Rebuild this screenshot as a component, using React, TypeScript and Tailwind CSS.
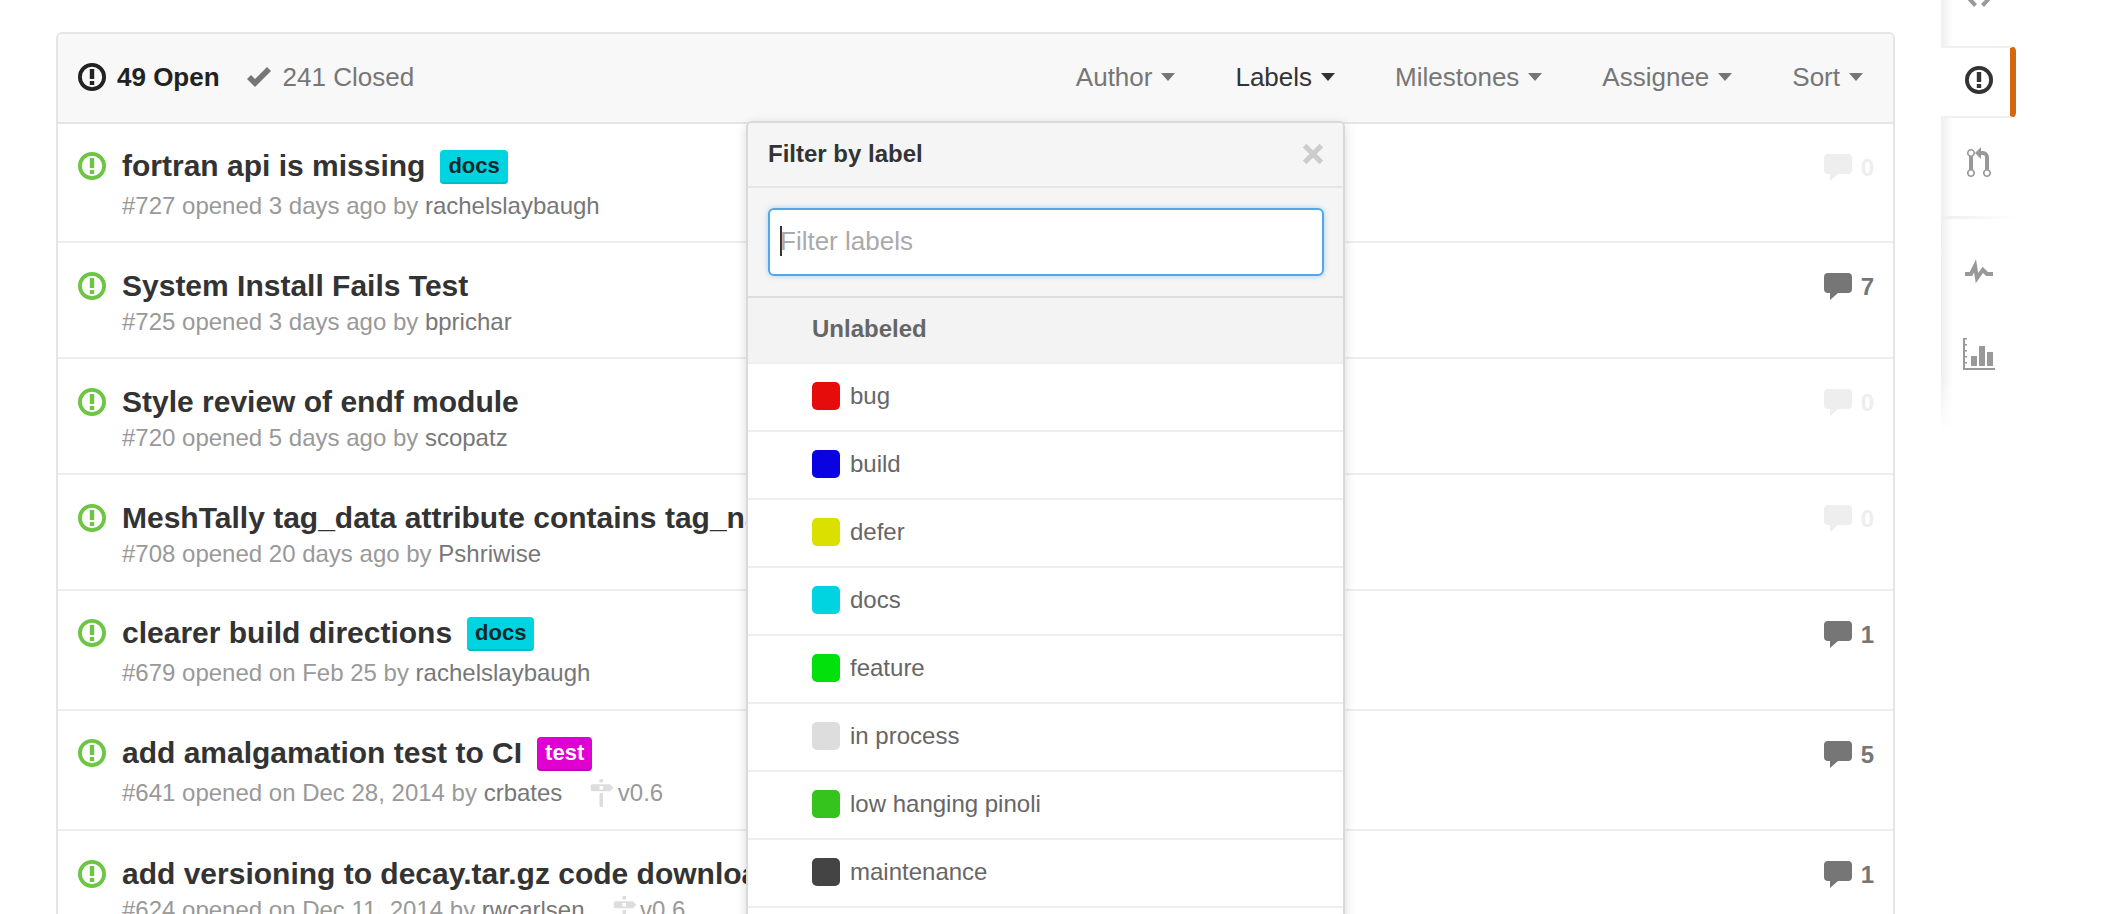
import React from 'react';

const ISSUE_PATH = 'M7 2.9a5.1 5.1 0 1 1 0 10.2A5.1 5.1 0 0 1 7 2.9zM7 1a7 7 0 1 0 0 14A7 7 0 0 0 7 1zm1.1 3H5.9v5h2.2V4zm0 6H5.9v2h2.2v-2z';

const IssueIcon: React.FC = () => (
  <svg viewBox="0 0 14 16" className="w-[28px] h-[32px] fill-current shrink-0">
    <path fillRule="evenodd" d={ISSUE_PATH} />
  </svg>
);

const CommentIcon: React.FC = () => (
  <svg viewBox="0 0 28 27" className="w-[28px] h-[27px] fill-current shrink-0">
    <path d="M4 0h20a4 4 0 0 1 4 4v12a4 4 0 0 1-4 4H14l-8 7v-7H4a4 4 0 0 1-4-4V4a4 4 0 0 1 4-4z" />
  </svg>
);

const MilestoneIcon: React.FC = () => (
  <svg viewBox="0 0 14 16" className="w-[24.5px] h-[28px] fill-[#ddd] shrink-0">
    <path d="M8 2H6V0h2v2zm4 5H2c-.55 0-1-.45-1-1V4c0-.55.45-1 1-1h10l2 2-2 2zM8 4H6v2h2V4zM6 16h2V8H6v8z" />
  </svg>
);

const Caret: React.FC<{ dark?: boolean }> = ({ dark }) => (
  <span className={`ml-[9px] w-0 h-0 border-x-[7.5px] border-t-[8px] border-x-transparent ${dark ? 'border-t-[#333]' : 'border-t-[#767676]'}`} />
);

interface IssueRow {
  title: string;
  meta: string;
  author: string;
  comments: number;
  height: string;
  label?: { name: string; className: string };
  milestone?: string;
}

const issues: IssueRow[] = [
  { title: 'fortran api is missing', meta: '#727 opened 3 days ago by', author: 'rachelslaybaugh', comments: 0, height: 'h-[119px]', label: { name: 'docs', className: 'bg-[#00d4e0] text-[#13282b]' } },
  { title: 'System Install Fails Test', meta: '#725 opened 3 days ago by', author: 'bprichar', comments: 7, height: 'h-[116px]' },
  { title: 'Style review of endf module', meta: '#720 opened 5 days ago by', author: 'scopatz', comments: 0, height: 'h-[116px]' },
  { title: 'MeshTally tag_data attribute contains tag_names', meta: '#708 opened 20 days ago by', author: 'Pshriwise', comments: 0, height: 'h-[116px]' },
  { title: 'clearer build directions', meta: '#679 opened on Feb 25 by', author: 'rachelslaybaugh', comments: 1, height: 'h-[120px]', label: { name: 'docs', className: 'bg-[#00d4e0] text-[#13282b]' } },
  { title: 'add amalgamation test to CI', meta: '#641 opened on Dec 28, 2014 by', author: 'crbates', comments: 5, height: 'h-[120px]', label: { name: 'test', className: 'bg-[#e000d0] text-white' }, milestone: 'v0.6' },
  { title: 'add versioning to decay.tar.gz code download', meta: '#624 opened on Dec 11, 2014 by', author: 'rwcarlsen', comments: 1, height: 'h-[120px]', milestone: 'v0.6' },
];

const labels = [
  { name: 'bug', color: 'bg-[#e60c0c]' },
  { name: 'build', color: 'bg-[#0b02e1]' },
  { name: 'defer', color: 'bg-[#dbe000]' },
  { name: 'docs', color: 'bg-[#00d4e0]' },
  { name: 'feature', color: 'bg-[#02e10c]' },
  { name: 'in process', color: 'bg-[#dddddd]' },
  { name: 'low hanging pinoli', color: 'bg-[#35c41d]' },
  { name: 'maintenance', color: 'bg-[#444444]' },
  { name: 'question', color: 'bg-[#cc317c]' },
];

const Issue: React.FC<{ issue: IssueRow; last: boolean }> = ({ issue, last }) => (
  <div className={`flex justify-between pl-[20px] pr-[19px] ${issue.height} ${last ? '' : 'border-b-2 border-[#eeeeee]'}`}>
    <div className="flex gap-4 min-w-0">
      <div className={issue.label ? 'pt-[26px] text-[#6cc644]' : 'pt-[27px] text-[#6cc644]'}>
        <IssueIcon />
      </div>
      <div className={issue.label ? 'pt-[21px]' : 'pt-[23px]'}>
        <div className={`flex items-center gap-[15px] whitespace-nowrap ${issue.label ? 'h-[42px]' : 'h-10'}`}>
          <span className="text-[30px] leading-10 font-bold text-[#333]">{issue.title}</span>
          {issue.label && (
            <span className={`h-[34px] mt-[2px] px-2 rounded-[4px] text-[22px] leading-[32px] font-bold shadow-[inset_0_-2px_0_rgba(0,0,0,0.12)] ${issue.label.className}`}>
              {issue.label.name}
            </span>
          )}
        </div>
        <div className={`flex items-center h-8 text-[24px] text-[#999] whitespace-nowrap ${issue.label ? 'mt-[3px]' : ''}`}>
          <span>{issue.meta}&nbsp;</span>
          <span className="text-[#777]">{issue.author}</span>
          {issue.milestone && (
            <span className="flex items-center ml-[27px] gap-[4px]">
              <MilestoneIcon />
              {issue.milestone}
            </span>
          )}
        </div>
      </div>
    </div>
    <div className={`flex items-start gap-[9px] pt-[30px] ${issue.comments === 0 ? 'text-[#eeeeee]' : 'text-[#767676]'}`}>
      <CommentIcon />
      <span className="text-[24px] leading-[27px] font-bold">{issue.comments}</span>
    </div>
  </div>
);

const LabelPopup: React.FC = () => (
  <div className="absolute left-[688px] top-[87px] w-[599px] bg-white border-2 border-[#d9d9d9] rounded-[6px] shadow-[0_3px_12px_rgba(0,0,0,0.15)]">
    <div className="flex items-center justify-between h-[65px] pb-[2px] pl-[20px] pr-[19px] bg-[#f5f5f5] border-b-2 border-[#e5e5e5] rounded-t-[4px]">
      <span className="text-[24px] font-bold text-[#333]">Filter by label</span>
      <svg viewBox="0 0 12 16" className="w-[22px] h-[28px] fill-[#cccccc] stroke-[#cccccc] stroke-[0.8]">
        <path d="M7.48 8l3.75 3.75-1.48 1.48L6 9.48l-3.75 3.75-1.48-1.48L4.52 8 .77 4.25l1.48-1.48L6 6.52l3.75-3.75 1.48 1.48z" />
      </svg>
    </div>
    <div className="pl-[20px] pr-[19px] py-[20px] bg-[#f5f5f5] border-b-2 border-[#dddddd]">
      <div className="flex items-center h-[68px] pb-[2px] pl-[10px] bg-white border-2 border-[#51a7e8] rounded-[6px] shadow-[0_0_5px_rgba(81,167,232,0.5)]">
        <span className="w-[2px] h-[30px] bg-[#333] -mr-[2px]" />
        <span className="text-[26px] text-[#aaaaaa]">Filter labels</span>
      </div>
    </div>
    <div className="flex items-center h-[66px] pb-[2px] pl-[64px] bg-[#f3f3f3] border-b-2 border-[#eeeeee] text-[24px] font-bold text-[#666]">
      Unlabeled
    </div>
    {labels.map((label) => (
      <div key={label.name} className="flex items-center gap-[10px] h-[68px] pb-[2px] pl-[64px] border-b-2 border-[#eeeeee]">
        <span className={`w-[28px] h-[28px] rounded-[5px] ${label.color}`} />
        <span className="text-[24px] text-[#666]">{label.name}</span>
      </div>
    ))}
  </div>
);

const Sidebar: React.FC = () => (
  <div className="ml-[46px] w-[75px] shrink-0">
    <div className="flex justify-center h-[87px] -mt-[41px] pt-[22px] bg-[linear-gradient(to_right,#eeeeee,#ffffff_12px)]">
      <svg viewBox="0 0 14 16" className="w-[28px] h-[32px] fill-[#999]">
        <path d="M9.5 3L8 4.5 11.5 8 8 11.5 9.5 13 14 8 9.5 3zm-5 0L0 8l4.5 5L6 11.5 2.5 8 6 4.5 4.5 3z" />
      </svg>
    </div>
    <div className="flex items-center justify-center h-[72px] pl-[6px] pb-[4px] bg-white border-y-2 border-[#f0f0f0] border-r-[6px] border-r-[#d26911] rounded-r-[5px] text-[#333]">
      <IssueIcon />
    </div>
    <div className="flex justify-center h-[98px] pt-[29px] bg-[linear-gradient(to_right,#eeeeee,#ffffff_12px)]">
      <svg viewBox="0 0 12 16" className="w-[24px] h-[32px] fill-[#999]">
        <path d="M11 11.28V5c-.03-.78-.34-1.47-.94-2.06C9.46 2.35 8.78 2.03 8 2H7V0L4 3l3 3V4h1c.27.02.48.11.69.31.21.2.3.42.31.69v6.28A1.993 1.993 0 0 0 10 15a1.993 1.993 0 0 0 1-3.72zm-1 2.92c-.66 0-1.2-.55-1.2-1.2 0-.65.55-1.2 1.2-1.2.65 0 1.2.55 1.2 1.2 0 .65-.55 1.2-1.2 1.2zM4 3c0-1.11-.89-2-2-2a1.993 1.993 0 0 0-1 3.72v6.56A1.993 1.993 0 0 0 2 15a1.993 1.993 0 0 0 1-3.72V4.72c.59-.34 1-.98 1-1.72zm-.8 10c0 .66-.55 1.2-1.2 1.2-.65 0-1.2-.55-1.2-1.2 0-.65.55-1.2 1.2-1.2.65 0 1.2.55 1.2 1.2zM2 4.2C1.34 4.2.8 3.65.8 3c0-.65.55-1.2 1.2-1.2.65 0 1.2.55 1.2 1.2 0 .65-.55 1.2-1.2 1.2z" />
      </svg>
    </div>
    <div className="h-[3px] bg-gradient-to-r from-[#eeeeee] to-white" />
    <div className="flex flex-col items-center h-[212px] bg-[linear-gradient(to_right,#eeeeee,#ffffff_12px)] [mask-image:linear-gradient(to_bottom,black_75%,transparent)]">
      <svg viewBox="0 0 14 16" className="w-[28px] h-[32px] fill-[#999] mt-[37px]">
        <path d="M11.5 8L8.8 5.4 6.6 8.5 5.5 1.6 2.38 8H0v2h3.6l.9-1.8.9 5.4L9 8.5l1.6 1.5H14V8h-2.5z" />
      </svg>
      <svg viewBox="0 0 32 32" className="w-[32px] h-[32px] fill-[#999] mt-[50px]">
        <path d="M0 0h2v30h30v2H0z" />
        <path d="M2 0h2v1.5H2zM2 6h2v1.5H2zM2 12h2v1.5H2zM2 18h2v1.5H2zM2 24h2v1.5H2z" />
        <path d="M8 18h6v10H8zM16 8h6v20h-6zM24 14h6v14h-6z" />
      </svg>
    </div>
  </div>
);

export default function App() {
  return (
    <div className="flex h-[914px] overflow-hidden bg-white pl-[56px] font-['Liberation_Sans',Arial,sans-serif]">
      <div className="relative w-[1839px] h-[1200px] shrink-0 mt-8 border-2 border-[#e5e5e5] rounded-[6px]">
        <div className="flex items-center justify-between h-[90px] pb-[2px] pl-[20px] pr-[30px] bg-[#f8f8f8] border-b-2 border-[#e5e5e5] rounded-t-[4px] text-[26px]">
          <div className="flex items-center">
            <svg viewBox="0 0 14 16" className="w-[28px] h-[32px] fill-[#222]">
              <path fillRule="evenodd" d={ISSUE_PATH} />
            </svg>
            <span className="ml-[11px] font-bold text-[#222]">49 Open</span>
            <svg viewBox="0 0 12 16" className="ml-[27px] w-[24px] h-[32px] fill-[#767676]">
              <path d="M10 3L4 9 2 7 0 9l4 4 8-8z" />
            </svg>
            <span className="ml-[12px] text-[#767676]">241 Closed</span>
          </div>
          <div className="flex items-center gap-[60px] text-[#767676]">
            {['Author', 'Labels', 'Milestones', 'Assignee', 'Sort'].map((name) => (
              <span key={name} className={`flex items-center ${name === 'Labels' ? 'text-[#333]' : ''}`}>
                {name}
                <Caret dark={name === 'Labels'} />
              </span>
            ))}
          </div>
        </div>
        {issues.map((issue, index) => (
          <Issue key={issue.title} issue={issue} last={index === issues.length - 1} />
        ))}
        <LabelPopup />
      </div>
      <Sidebar />
    </div>
  );
}
